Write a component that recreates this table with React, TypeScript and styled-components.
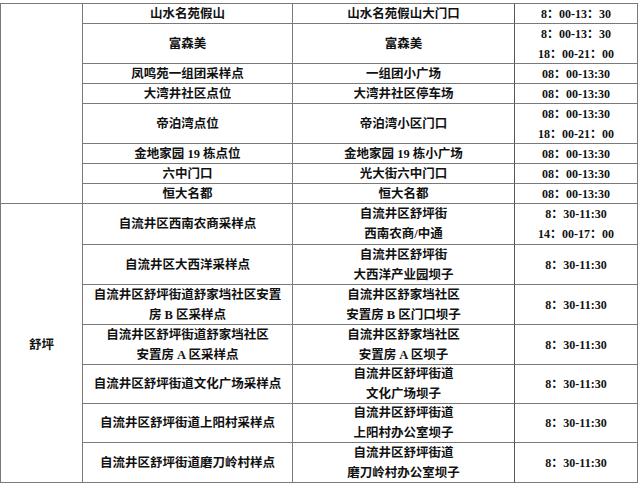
import React from "react";
import styled, { createGlobalStyle } from "styled-components";

const Global = createGlobalStyle`
  html, body { margin: 0; padding: 0; background: #fff; }
  body { font-family: "Liberation Serif", "Noto Sans CJK SC", serif; color: #111; }
  * { box-sizing: border-box; }
`;

const Page = styled.div`
  padding-top: 3px;
  width: 640px;
`;

const Grid = styled.div<{ $rows: string }>`
  display: grid;
  grid-template-columns: 82px 210px 222px 123px;
  grid-template-rows: ${(p) => p.$rows};
  width: 638px;
  border-top: 1px solid #7a7a7a;
  border-left: 1px solid #7a7a7a;
  font-family: "Liberation Serif", "Noto Sans CJK SC", serif;
  font-weight: 700;
  font-size: 12.5px;
`;

const Cell = styled.div<{ $span?: number }>`
  display: flex;
  flex-direction: column;
  align-items: center;
  justify-content: center;
  border-right: 1px solid #7a7a7a;
  border-bottom: 1px solid #7a7a7a;
  white-space: nowrap;
  overflow: hidden;
  ${(p) => (p.$span ? `grid-row: span ${p.$span};` : "")}
`;

const TimeCell = styled(Cell)`
  font-size: 12px;
`;

const PlaceCell = styled(Cell)`
  border-right-color: #555;
`;

const Line = styled.div`
  height: 20px;
  line-height: 20px;
`;

type Row = { h: number; site: string[]; place: string[]; time: string[] };

const group1: Row[] = [
  { h: 20, site: ["山水名苑假山"], place: ["山水名苑假山大门口"], time: ["8：00-13：30"] },
  { h: 40, site: ["富森美"], place: ["富森美"], time: ["8：00-13：30", "18：00-21：00"] },
  { h: 20, site: ["凤鸣苑一组团采样点"], place: ["一组团小广场"], time: ["08：00-13:30"] },
  { h: 20, site: ["大湾井社区点位"], place: ["大湾井社区停车场"], time: ["08：00-13:30"] },
  { h: 40, site: ["帝泊湾点位"], place: ["帝泊湾小区门口"], time: ["08：00-13:30", "18：00-21：00"] },
  { h: 20, site: ["金地家园 19 栋点位"], place: ["金地家园 19 栋小广场"], time: ["08：00-13:30"] },
  { h: 20, site: ["六中门口"], place: ["光大街六中门口"], time: ["08：00-13:30"] },
  { h: 20, site: ["恒大名都"], place: ["恒大名都"], time: ["08：00-13:30"] },
];

const group2: Row[] = [
  { h: 41, site: ["自流井区西南农商采样点"], place: ["自流井区舒坪街", "西南农商/中通"], time: ["8：30-11:30", "14：00-17：00"] },
  { h: 40, site: ["自流井区大西洋采样点"], place: ["自流井区舒坪街", "大西洋产业园坝子"], time: ["8：30-11:30"] },
  { h: 40, site: ["自流井区舒坪街道舒家垱社区安置", "房 B 区采样点"], place: ["自流井区舒家垱社区", "安置房 B 区门口坝子"], time: ["8：30-11:30"] },
  { h: 40, site: ["自流井区舒坪街道舒家垱社区", "安置房 A 区采样点"], place: ["自流井区舒家垱社区", "安置房 A 区坝子"], time: ["8：30-11:30"] },
  { h: 39, site: ["自流井区舒坪街道文化广场采样点"], place: ["自流井区舒坪街道", "文化广场坝子"], time: ["8：30-11:30"] },
  { h: 39, site: ["自流井区舒坪街道上阳村采样点"], place: ["自流井区舒坪街道", "上阳村办公室坝子"], time: ["8：30-11:30"] },
  { h: 40, site: ["自流井区舒坪街道磨刀岭村样点"], place: ["自流井区舒坪街道", "磨刀岭村办公室坝子"], time: ["8：30-11:30"] },
];

const Lines = ({ items }: { items: string[] }) => (
  <>
    {items.map((t, i) => (
      <Line key={i}>{t}</Line>
    ))}
  </>
);

const Group = ({ rows, label }: { rows: Row[]; label: string }) => (
  <>
    <Cell $span={rows.length}>{label}</Cell>
    {rows.map((r, i) => (
      <React.Fragment key={i}>
        <Cell>
          <Lines items={r.site} />
        </Cell>
        <PlaceCell>
          <Lines items={r.place} />
        </PlaceCell>
        <TimeCell>
          <Lines items={r.time} />
        </TimeCell>
      </React.Fragment>
    ))}
  </>
);

export default function App() {
  const rows = [...group1, ...group2].map((r) => `${r.h}px`).join(" ");
  return (
    <Page>
      <Global />
      <Grid $rows={rows}>
        <Group rows={group1} label="" />
        <Group rows={group2} label="舒坪" />
      </Grid>
    </Page>
  );
}
